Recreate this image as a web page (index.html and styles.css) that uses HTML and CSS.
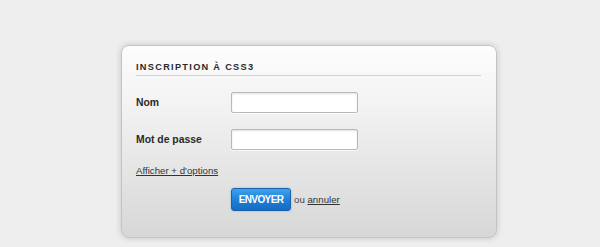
FILE: index.html
```html
<!DOCTYPE html>
<html lang="fr">
<head>
<meta charset="utf-8">
<title>Inscription</title>
<link rel="stylesheet" href="styles.css">
</head>
<body>
<form class="card">
  <h1 class="title">Inscription à CSS3</h1>
  <div class="row">
    <label class="label" for="nom">Nom</label>
    <input class="field" id="nom" type="text">
  </div>
  <div class="row row-pass">
    <label class="label" for="mdp">Mot de passe</label>
    <input class="field" id="mdp" type="password">
  </div>
  <a class="more" href="#">Afficher + d'options</a>
  <div class="actions">
    <button class="btn" type="button">ENVOYER</button>
    <span class="or">ou <a href="#">annuler</a></span>
  </div>
</form>
</body>
</html>
```
FILE: styles.css
```css
html, body {
  margin: 0;
  padding: 0;
}
body {
  background: #eeeeee;
  font-family: "Liberation Sans", Arial, sans-serif;
  color: #333;
  padding-top: 45px;
  padding-left: 121px;
  height: 247px;
  box-sizing: border-box;
  overflow: hidden;
}
.card {
  width: 376px;
  height: 193px;
  box-sizing: border-box;
  border: 1px solid #c4c4c4;
  border-radius: 8px;
  background: linear-gradient(#fdfdfd, #f3f3f3 30%, #d7d7d7);
  box-shadow: 0 0 6px rgba(0,0,0,0.18);
  padding: 16px 15px 0 14px;
  display: flex;
  flex-direction: column;
  align-items: flex-start;
}
.title {
  margin: 0;
  align-self: stretch;
  font-size: 9.2px;
  line-height: 11px;
  font-weight: bold;
  letter-spacing: 1.3px;
  text-transform: uppercase;
  color: #2a2a2a;
  padding-bottom: 2px;
  border-bottom: 1px solid #d2d2d2;
}
.row {
  display: flex;
  align-items: center;
  margin-top: 16px;
}
.row-pass {
  margin-top: 16px;
}
.label {
  width: 95px;
  font-size: 10.4px;
  font-weight: bold;
  color: #2a2a2a;
}
.field {
  width: 127px;
  height: 21px;
  box-sizing: border-box;
  margin: 0;
  border: 1px solid #b8b8b8;
  border-radius: 2px;
  background: #fff;
  box-shadow: inset 0 1px 2px rgba(0,0,0,0.12), 0 1px 0 rgba(255,255,255,0.7);
}
.more {
  margin-top: 14px;
  font-size: 9.7px;
  line-height: 14px;
  color: #333;
  text-decoration: underline;
}
.actions {
  margin-top: 10px;
  margin-left: 95px;
  display: flex;
  align-items: center;
}
.btn {
  width: 60px;
  height: 23px;
  margin: 0;
  padding: 0;
  border: 1px solid #1662ad;
  border-radius: 3px;
  background: linear-gradient(#3fa3ec, #1f80d8 50%, #176bc2);
  color: #fff;
  font-family: "Liberation Sans", Arial, sans-serif;
  font-size: 10px;
  letter-spacing: -0.6px;
  font-weight: bold;
  box-shadow: 0 0 2px rgba(40,130,220,0.5);
}
.or {
  margin-left: 3px;
  font-size: 9.7px;
  color: #444;
}
.or a {
  color: #333;
  text-decoration: underline;
}
```
